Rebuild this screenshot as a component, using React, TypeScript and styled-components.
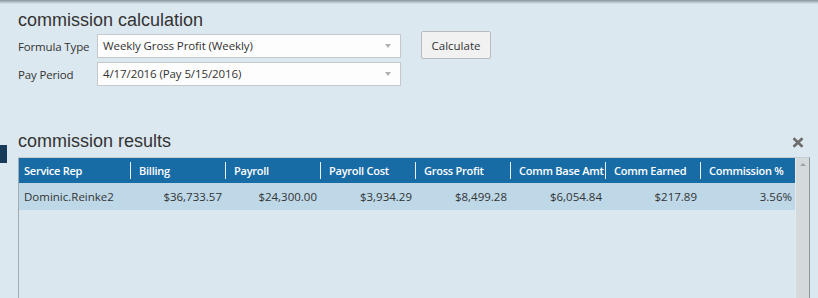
import React from 'react';
import styled, { createGlobalStyle } from 'styled-components';

const GlobalStyle = createGlobalStyle`
  html, body { margin: 0; padding: 0; background: #dce8ef; overflow: hidden; }
  body { font-family: "Open Sans", "Liberation Sans", sans-serif; color: #333; }
  * { box-sizing: border-box; }
`;

const Page = styled.div`
  width: 818px;
  height: 298px;
  overflow: hidden;
  background: #dce8ef;
`;

const TopEdge = styled.div`
  height: 4px;
  background: linear-gradient(#86949c, #dce8ef);
`;

const SectionTitle = styled.h2`
  margin: 0;
  font-family: "Liberation Sans", Arial, sans-serif;
  font-weight: normal;
  font-size: 18px;
  line-height: 22px;
  color: #333;
`;

const CalcSection = styled.section`
  padding: 5px 0 0 18px;
`;

const Controls = styled.div`
  display: flex;
  align-items: flex-start;
  gap: 20px;
`;

const Fields = styled.div`
  display: grid;
  grid-template-columns: 79px 304px;
  row-gap: 4px;
  align-items: center;
  margin-top: 3px;
`;

const Label = styled.label`
  font-size: 11.5px;
  color: #333;
  letter-spacing: -0.15px;
`;

const SelectBox = styled.div`
  position: relative;
  height: 24px;
  border: 1px solid #c6c9cb;
  background: #fdfdfd;
  padding-left: 5px;
  font-size: 11.5px;
  line-height: 22px;
  color: #333;
  letter-spacing: -0.1px;
`;

const Arrow = styled.span`
  position: absolute;
  right: 9px;
  top: 9px;
  width: 0;
  height: 0;
  border-left: 3.5px solid transparent;
  border-right: 3.5px solid transparent;
  border-top: 4px solid #b0b0b0;
`;

const Button = styled.button`
  width: 70px;
  height: 28px;
  border: 1px solid #b9bcbe;
  border-radius: 2px;
  background: #f1f1f1;
  font-family: "Open Sans", "Liberation Sans", sans-serif;
  font-size: 11.5px;
  color: #333;
  padding: 0;
`;

const ResultsSection = styled.section`
  display: flex;
  margin-top: 44px;
`;

const Marker = styled.div`
  width: 7px;
  height: 18px;
  margin-top: 15px;
  flex-shrink: 0;
  background: #173a58;
`;

const ResultsBody = styled.div`
  margin-left: 11px;
  width: 792px;
`;

const TitleRow = styled.div`
  display: flex;
  justify-content: space-between;
  align-items: flex-start;
  height: 27px;
`;

const CloseIcon = styled.svg`
  margin: 7px 6px 0 0;
`;

const TableFrame = styled.div`
  display: flex;
  height: 160px;
  border-top: 1px solid #c5cdd2;
  border-left: 1px solid #a3abb0;
  border-right: 1px solid #8e979b;
`;

const GridArea = styled.div`
  width: 776px;
  background: #dae7ee;
`;

const Row = styled.div<{ $header?: boolean }>`
  display: grid;
  grid-template-columns: 111px repeat(7, 95px);
  height: ${p => (p.$header ? 25 : 27)}px;
  background: ${p => (p.$header ? '#186ca6' : '#bed8e8')};
`;

const HeadCell = styled.div<{ $first?: boolean }>`
  position: relative;
  padding-left: ${p => (p.$first ? 5 : 9)}px;
  color: #fff;
  font-size: 11px;
  font-weight: 600;
  line-height: 25px;
  white-space: nowrap;
  overflow: hidden;
  letter-spacing: -0.25px;
  &::before {
    content: '';
    display: ${p => (p.$first ? 'none' : 'block')};
    position: absolute;
    left: 0;
    top: 4px;
    bottom: 4px;
    width: 1px;
    background: #e8f1f7;
  }
`;

const Cell = styled.div<{ $left?: boolean }>`
  padding: 1px ${p => (p.$left ? 0 : 3)}px 0 ${p => (p.$left ? 5 : 0)}px;
  text-align: ${p => (p.$left ? 'left' : 'right')};
  font-size: 11.5px;
  line-height: 26px;
  color: #333;
  white-space: nowrap;
`;

const ScrollTrack = styled.div`
  width: 14px;
  background: #d4d9dc;
  border-left: 1px solid #e4e9eb;
  display: flex;
  justify-content: center;
  padding-top: 5px;
`;

const ScrollArrow = styled.span`
  width: 0;
  height: 0;
  border-left: 3px solid transparent;
  border-right: 3px solid transparent;
  border-bottom: 3px solid #9da4a8;
`;

const columns = [
  'Service Rep',
  'Billing',
  'Payroll',
  'Payroll Cost',
  'Gross Profit',
  'Comm Base Amt',
  'Comm Earned',
  'Commission %',
];

const values = [
  'Dominic.Reinke2',
  '$36,733.57',
  '$24,300.00',
  '$3,934.29',
  '$8,499.28',
  '$6,054.84',
  '$217.89',
  '3.56%',
];

export default function App() {
  return (
    <Page>
      <GlobalStyle />
      <TopEdge />
      <CalcSection>
        <SectionTitle>commission calculation</SectionTitle>
        <Controls>
          <Fields>
            <Label>Formula Type</Label>
            <SelectBox>
              Weekly Gross Profit (Weekly)
              <Arrow />
            </SelectBox>
            <Label>Pay Period</Label>
            <SelectBox>
              4/17/2016 (Pay 5/15/2016)
              <Arrow />
            </SelectBox>
          </Fields>
          <Button>Calculate</Button>
        </Controls>
      </CalcSection>
      <ResultsSection>
        <Marker />
        <ResultsBody>
          <TitleRow>
            <SectionTitle>commission results</SectionTitle>
            <CloseIcon width="12" height="11" viewBox="0 0 12 11">
              <path d="M1.5 1.2 L10.5 9.8 M10.5 1.2 L1.5 9.8" stroke="#6c6c6c" strokeWidth="2.6" strokeLinecap="butt" />
            </CloseIcon>
          </TitleRow>
          <TableFrame>
            <GridArea>
              <Row $header>
                {columns.map((c, i) => (
                  <HeadCell key={c} $first={i === 0}>{c}</HeadCell>
                ))}
              </Row>
              <Row>
                {values.map((v, i) => (
                  <Cell key={i} $left={i === 0}>{v}</Cell>
                ))}
              </Row>
            </GridArea>
            <ScrollTrack>
              <ScrollArrow />
            </ScrollTrack>
          </TableFrame>
        </ResultsBody>
      </ResultsSection>
    </Page>
  );
}
